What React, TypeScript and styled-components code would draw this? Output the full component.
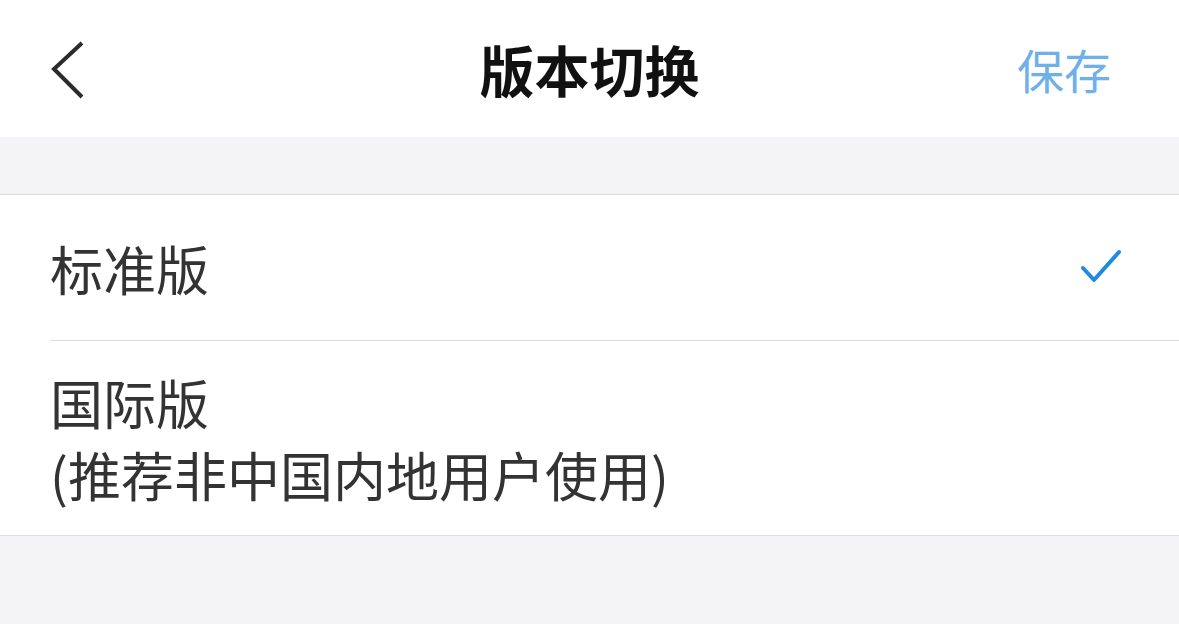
import React from "react";
import styled, { createGlobalStyle } from "styled-components";

const Global = createGlobalStyle`
  html, body { margin: 0; padding: 0; background: #f4f4f7; }
  body { font-family: "Noto Sans CJK SC", "Noto Sans", sans-serif; }
`;

const Page = styled.div`
  width: 1179px;
  min-height: 624px;
  background: #f4f4f7;
`;

const Header = styled.header`
  height: 137px;
  background: #fff;
  display: grid;
  grid-template-columns: 200px 1fr 200px;
  align-items: center;
`;

const BackButton = styled.button`
  border: none;
  background: none;
  padding: 4px 0 0 48px;
  display: flex;
  align-items: center;
  height: 100%;
  cursor: pointer;
`;

const Title = styled.h1`
  margin: 0;
  text-align: center;
  font-size: 55px;
  font-weight: 700;
  color: #111;
  line-height: 1;
`;

const SaveButton = styled.button`
  justify-self: end;
  border: none;
  background: none;
  padding: 0 68px 0 0;
  font-family: inherit;
  font-size: 47px;
  color: #6fb0ea;
  line-height: 1;
  cursor: pointer;
`;

const Spacer = styled.div`
  height: 57px;
`;

const List = styled.ul`
  list-style: none;
  margin: 0;
  padding: 0 0 0 50px;
  background: #fff;
  border-top: 1px solid #dcdcdf;
  border-bottom: 1px solid #dcdcdf;
`;

const Item = styled.li<{ $last?: boolean }>`
  display: flex;
  align-items: center;
  justify-content: space-between;
  padding: ${(p) => (p.$last ? "25px 0" : "0")};
  min-height: ${(p) => (p.$last ? "194px" : "146px")};
  box-sizing: border-box;
  border-bottom: ${(p) => (p.$last ? "none" : "1px solid #dcdcdf")};
`;

const Label = styled.div`
  font-size: 53px;
  line-height: 72px;
  color: #333;
`;

const Check = styled.svg`
  margin-right: 56px;
`;

export default function App() {
  return (
    <Page>
      <Global />
      <Header>
        <BackButton aria-label="返回">
          <svg width="40" height="60" viewBox="0 0 40 60">
            <path d="M34 2 L6 28 L34 56" fill="none" stroke="#2b2b2b" strokeWidth="4" strokeLinejoin="miter" />
          </svg>
        </BackButton>
        <Title>版本切换</Title>
        <SaveButton>保存</SaveButton>
      </Header>
      <Spacer />
      <List>
        <Item>
          <Label>标准版</Label>
          <Check width="44" height="40" viewBox="0 0 44 40">
            <path d="M4 20 L15 32 L40 4" fill="none" stroke="#1e8ae2" strokeWidth="4" strokeLinecap="round" strokeLinejoin="round" />
          </Check>
        </Item>
        <Item $last>
          <Label>
            国际版
            <br />
            (推荐非中国内地用户使用)
          </Label>
        </Item>
      </List>
    </Page>
  );
}
